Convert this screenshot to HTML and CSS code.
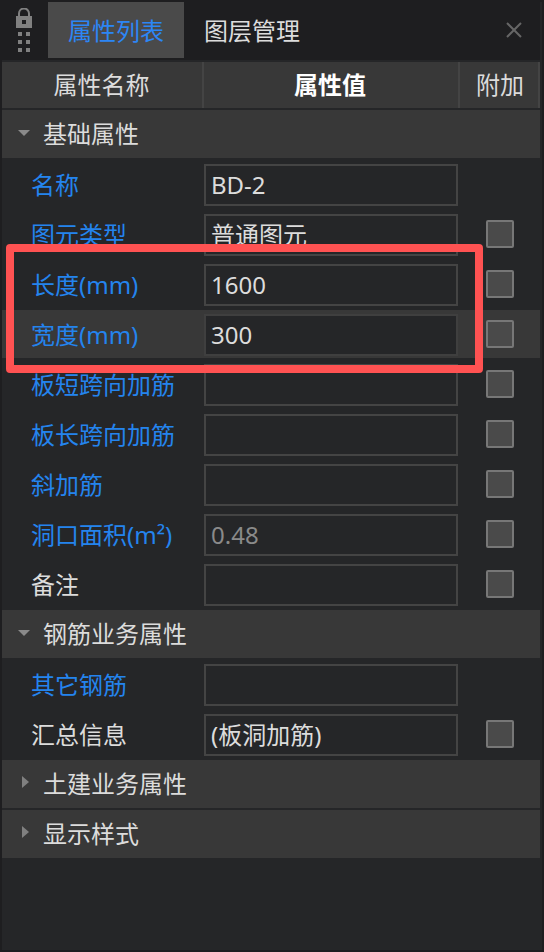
FILE: index.html
```html
<!DOCTYPE html>
<html lang="zh">
<head>
<meta charset="utf-8">
<title>属性列表</title>
<link rel="stylesheet" href="styles.css">
</head>
<body>
<div class="panel">
  <header class="topbar">
    <div class="grip">
      <svg class="lock" width="16" height="20" viewBox="0 0 16 20"><path d="M3 9V5.500a5 5 0 0 1 10 0V9" fill="none" stroke="#808080" stroke-width="2"/><path fill-rule="evenodd" d="M0 8h16v12H0zM6 12h4v4H6z" fill="#808080"/></svg>
      <div class="dots"><i></i><i></i><i></i><i></i><i></i><i></i></div>
    </div>
    <div class="tab active">属性列表</div>
    <div class="tab">图层管理</div>
    <svg class="close" width="16" height="16" viewBox="0 0 16 16"><path d="M1 1l14 14M15 1L1 15" stroke="#666" stroke-width="2" fill="none"/></svg>
  </header>
  <div class="thead">
    <div class="th">属性名称</div>
    <div class="th strong">属性值</div>
    <div class="th last">附加</div>
  </div>
  <div class="group"><span class="arrow down"></span>基础属性</div>
  <div class="row"><label class="blue">名称</label><div class="input">BD-2</div><span></span></div>
  <div class="row"><label class="blue">图元类型</label><div class="input">普通图元</div><span class="check"></span></div>
  <div class="row"><label class="blue">长度(mm)</label><div class="input">1600</div><span class="check"></span></div>
  <div class="row hover"><label class="blue">宽度(mm)</label><div class="input focus">300</div><span class="check"></span></div>
  <div class="row"><label class="blue">板短跨向加筋</label><div class="input"></div><span class="check"></span></div>
  <div class="row"><label class="blue">板长跨向加筋</label><div class="input"></div><span class="check"></span></div>
  <div class="row"><label class="blue">斜加筋</label><div class="input"></div><span class="check"></span></div>
  <div class="row"><label class="blue">洞口面积(m²)</label><div class="input muted">0.48</div><span class="check"></span></div>
  <div class="row"><label>备注</label><div class="input"></div><span class="check"></span></div>
  <div class="group"><span class="arrow down"></span>钢筋业务属性</div>
  <div class="row"><label class="blue">其它钢筋</label><div class="input"></div><span></span></div>
  <div class="row"><label>汇总信息</label><div class="input">(板洞加筋)</div><span class="check"></span></div>
  <div class="group"><span class="arrow right"></span>土建业务属性</div>
  <div class="group"><span class="arrow right"></span>显示样式</div>
  <div class="callout"></div>
</div>
</body>
</html>
```
FILE: styles.css
```css
* { box-sizing: border-box; }
html, body { margin: 0; height: 100%; background: #1e1e20; }
body { font-family: "Noto Sans", "Noto Sans CJK SC", sans-serif; font-size: 24px; color: #dcdcdc; }
.panel { position: relative; width: 544px; height: 952px; padding: 2px 4px 2px 2px; background: #252628; box-shadow: inset 0 0 0 2px #1e1e20; overflow: hidden; }
.topbar { display: flex; align-items: stretch; height: 58px; margin-bottom: 2px; background: #1e1e20; position: relative; }
.grip { width: 46px; display: flex; flex-direction: column; align-items: center; padding-top: 6px; padding-right: 2px; }
.lock { display: block; }
.dots { display: grid; grid-template-columns: 4px 4px; grid-auto-rows: 4px; column-gap: 4px; row-gap: 4px; margin-top: 4px; }
.dots i { width: 4px; height: 4px; background: #808080; }
.tab { display: flex; align-items: center; justify-content: center; width: 136px; height: 56px; padding-top: 2px; line-height: 1; }
.tab.active { background: #4a4a4a; color: #2c86f5; }
.tab + .tab { width: auto; padding-left: 20px; }
.close { position: absolute; right: 18px; top: 20px; }
.thead { display: grid; grid-template-columns: 202px 256px 78px; height: 46px; background: #383838; margin-bottom: 2px; border-right: 2px solid #444; }
.th { display: flex; align-items: center; justify-content: center; padding: 0 1px 0 0; line-height: 1; border-right: 2px solid #444; }
.th.strong { font-weight: 700; color: #fff; padding-right: 2px; }
.th.last { border-right: 0; padding: 0 0 0 2px; }
.group { display: flex; align-items: center; height: 48px; margin-bottom: 2px; padding-left: 41px; background: #383838; position: relative; line-height: 1; }
.arrow { position: absolute; width: 0; height: 0; }
.arrow.down { left: 16px; top: 20px; border-left: 6px solid transparent; border-right: 6px solid transparent; border-top: 6px solid #8a8a8a; }
.arrow.right { left: 20px; top: 16px; border-top: 6px solid transparent; border-bottom: 6px solid transparent; border-left: 7px solid #808080; }
.row { display: grid; grid-template-columns: 202px 254px 82px; align-items: center; height: 50px; padding-bottom: 2px; }
.row label { padding: 2px 0 0 29px; line-height: 1; white-space: nowrap; }
.blue { color: #2484ee; }
.input { height: 42px; margin-top: 2px; padding: 0 5px; border: 2px solid #444; background: #252628; display: flex; align-items: center; line-height: 1; }
.input.focus { background: #252628; border-color: #3f3f3f; }
.muted { color: #8a8a8a; }
.hover { background: #383838; height: 48px; margin-bottom: 2px; padding-bottom: 0; }
.check { width: 28px; height: 28px; margin-left: 28px; background: #4a4a4a; border: 2px solid #777; border-radius: 2px; }
.callout { position: absolute; left: 6px; top: 244px; width: 477px; height: 129px; border: 8px solid #ff5252; border-radius: 4px; pointer-events: none; }
```
